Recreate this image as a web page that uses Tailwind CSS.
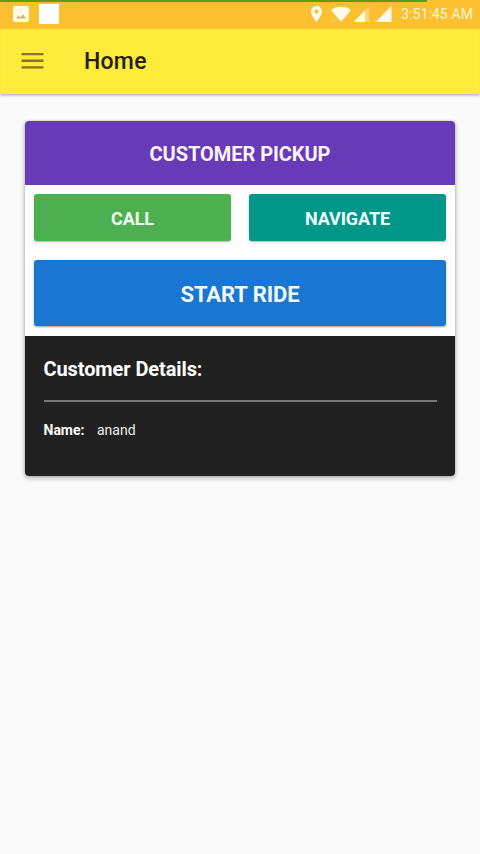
<!DOCTYPE html>
<html lang="en">
<head>
<meta charset="utf-8">
<title>Home</title>
<script src="https://cdn.jsdelivr.net/npm/@tailwindcss/browser@4"></script>
</head>
<body class="h-[854px] w-[480px] overflow-hidden bg-[#fafafa] font-['Roboto',sans-serif]">
<div class="relative flex h-7 items-center bg-[#fbbf2f] pl-[13px] pr-[7px] text-[#fff6d8]">
  <div class="absolute left-0 top-0 h-[1.5px] w-[427px] bg-[#5a9f12]"></div>
  <svg class="h-4 w-4" viewBox="0 0 16 16"><rect y="0" width="16" height="16" rx="2" fill="#fffbe9"/><path d="M3 12.500L5.500 9.500L7.500 11.500L10 8.500L13 12.500Z" fill="#d3b45c"/></svg>
  <div class="ml-[10px] h-5 w-5 bg-white"></div>
  <svg class="ml-auto h-4 w-[82px]" viewBox="310 6 82 16" fill="#fffbe9">
    <path fill-rule="evenodd" d="M316.500 6C313.200 6 311 8.500 311 11.500C311 15.500 316.500 22 316.500 22S322 15.500 322 11.500C322 8.500 319.800 6 316.500 6ZM316.500 9.500A2 2 0 1 1 316.500 13.500A2 2 0 1 1 316.500 9.500Z"/>
    <path d="M331 10C336.500 5.800 345.500 5.800 351 10L341 22L337.500 17.800L336 16Z"/>
    <path d="M332 17.500h1.500v1.500h-1.500zM332 20h1.500v1.500h-1.500zM335 20h1.500v1.500h-1.500z" opacity=".6"/>
    <path d="M353.500 22L369 6.500V22Z" opacity=".4"/>
    <path d="M353.500 22L365 10.500V22Z"/>
    <path d="M375.500 22L391.500 6V22Z"/>
  </svg>
  <span class="ml-[9px] w-[72px] whitespace-nowrap text-[14px] leading-7 tracking-[0.1px]">3:51:45 AM</span>
</div>
<header class="flex h-[66px] items-center bg-[#ffeb3b] pl-[21px] shadow-[0_1px_3px_rgba(0,0,0,0.35),inset_0_1px_1px_rgba(170,110,0,0.3)]">
  <svg class="h-4 w-[23px]" viewBox="0 0 23 16" fill="#86761c"><path d="M.5 0h22v2.300h-22zM.5 6.600h22v2.300h-22zM.5 13.200h22v2.300h-22z"/></svg>
  <h1 class="ml-10 pt-px text-[23px] font-medium leading-none tracking-[0.25px] text-[#231f0c]">Home</h1>
</header>
<main class="mx-[25px] mt-[27px] h-[355px] overflow-hidden rounded bg-white shadow-[0_2px_5px_rgba(0,0,0,0.32),0_0_2px_rgba(0,0,0,0.2)]">
  <h2 class="flex h-16 items-center justify-center bg-[#673ab7] pt-[2px] text-[20px] font-bold tracking-[-0.05px] text-[#fbf4ff]">CUSTOMER PICKUP</h2>
  <div class="flex h-[151px] flex-col gap-[19px] px-[9px] pt-[9px]">
    <div class="grid grid-cols-2 gap-[18px]">
      <button class="h-[47px] rounded-[3px] bg-[#4caf50] pt-px text-[18px] font-bold tracking-[-0.1px] text-[#f0fff0] shadow-[0_1px_2px_rgba(0,0,0,0.3)]">CALL</button>
      <button class="h-[47px] rounded-[3px] bg-[#009688] pt-px text-[18px] font-bold tracking-[-0.1px] text-[#f0fffd] shadow-[0_1px_2px_rgba(0,0,0,0.3)]">NAVIGATE</button>
    </div>
    <button class="h-[66px] rounded-[3px] bg-[#1976d2] pt-[2px] text-[22px] font-bold tracking-[-0.1px] text-[#f0faff] shadow-[0_1px_2px_rgba(0,0,0,0.4)]">START RIDE</button>
  </div>
  <section class="h-[140px] bg-[#212121] pl-[18.500px] pr-[18px] pt-[21px] text-white">
    <h3 class="h-[43px] text-[20px] font-bold leading-6 tracking-[-0.1px]">Customer Details:</h3>
    <div class="h-[2px] bg-[#777]"></div>
    <div class="mt-[18px] flex text-[14px] leading-5"><span class="w-[53.500px] font-bold">Name:</span><span class="text-[#eeeeee]">anand</span></div>
  </section>
</main>
</body>
</html>
